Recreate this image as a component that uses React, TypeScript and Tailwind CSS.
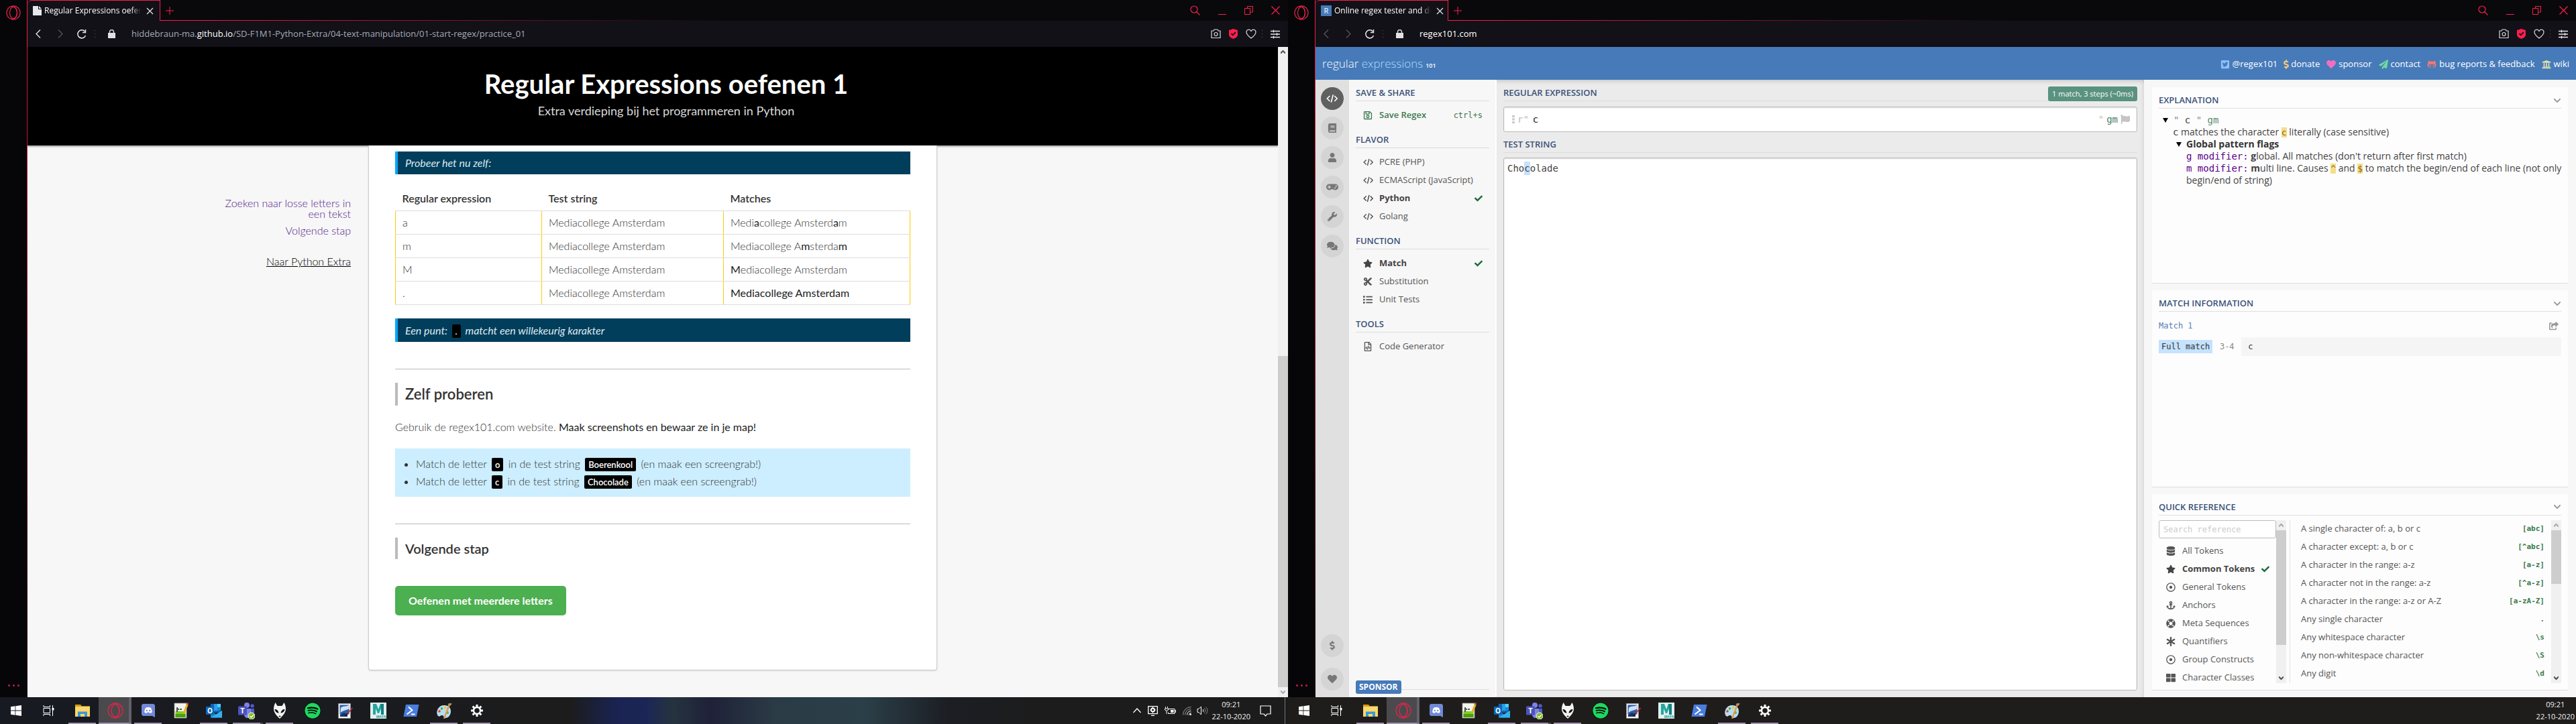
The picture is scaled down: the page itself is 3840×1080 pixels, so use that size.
import React from "react";
import {
  FaAnchor, FaAsterisk, FaBook, FaCheck, FaChevronDown, FaComments, FaCut, FaDatabase,
  FaDollarSign, FaFlag, FaGamepad, FaGithubAlt, FaHeart, FaLifeRing, FaList,
  FaPaperPlane, FaRegDotCircle, FaRegFileCode, FaRegSave, FaShareSquare, FaSpotify, FaStar,
  FaThLarge, FaTwitterSquare, FaUniversity, FaUser, FaWrench,
} from "react-icons/fa";

type Kids = { children: React.ReactNode };

/* ---------- browser chrome ---------- */

function OperaLogo({ className }: { className: string }) {
  return (
    <svg viewBox="0 0 24 24" fill="none" stroke="#e0244c" strokeWidth="1.3" className={className}>
      <circle cx="12" cy="12" r="11" />
      <ellipse cx="12" cy="12" rx="6" ry="9.5" />
      <path d="M9 2.500c5-1.500 9 3 9 9.500s-4 11-9 9.500" />
    </svg>
  );
}

function Dots() {
  return (
    <span className="flex flex-col gap-1" aria-hidden="true">
      <i className="size-px bg-[#5a5a62]" />
      <i className="size-px bg-[#5a5a62]" />
      <i className="size-px bg-[#5a5a62]" />
    </span>
  );
}

function ToolbarIcons() {
  return (
    <div className="flex items-center pr-3">
      <button aria-label="Snapshot" className="mr-3">
        <svg width="15" height="15" viewBox="0 0 15 15" fill="none" stroke="#d6d9de" strokeWidth="1.200">
          <path d="M1 3h3l1-2h5l1 2h3v10.500H1z" />
          <circle cx="7.500" cy="8" r="2.500" />
        </svg>
      </button>
      <button aria-label="Protection" className="mr-3">
        <svg width="13" height="15" viewBox="0 0 13 15">
          <path d="M6.500 0L13 2v7c0 3-3.500 5-6.500 6C3.500 14 0 12 0 9V2z" fill="#fa1e4e" />
          <path d="M3.500 7l2.300 2.300L9.800 5.200" fill="none" stroke="#121117" strokeWidth="1.800" />
        </svg>
      </button>
      <button aria-label="Bookmark" className="mr-2">
        <svg width="16" height="15" viewBox="0 0 16 15" fill="none" stroke="#d6d9de" strokeWidth="1.200">
          <path d="M8 14C4 11 1 8.500 1 5c0-4 5-5.500 7-1.500C10 -.5 15 1 15 5c0 3.500-3 6-7 9z" />
        </svg>
      </button>
      <Dots />
      <button aria-label="Easy setup" className="ml-3">
        <svg width="14" height="14" viewBox="0 0 14 14" stroke="#e6e6ea" strokeWidth="1.300">
          <path d="M0 2.500h14M0 7h14M0 11.500h14M4.500 .5v4M9.500 5v4M4.500 9.500v4" />
        </svg>
      </button>
    </div>
  );
}

function Browser({
  favicon, title, address, canGoBack, children,
}: Kids & { favicon: React.ReactNode; title: string; address: React.ReactNode; canGoBack: boolean }) {
  return (
    <div className="flex grow bg-[#060608]">
      <aside className="flex w-10 shrink-0 flex-col items-center justify-between pt-2 pb-3">
        <button aria-label="Opera menu"><OperaLogo className="size-[22px]" /></button>
        <button aria-label="More" className="flex gap-1 pb-1">
          <i className="size-[3px] rounded-full bg-[#c81e42]" />
          <i className="size-[3px] rounded-full bg-[#c81e42]" />
          <i className="size-[3px] rounded-full bg-[#c81e42]" />
        </button>
      </aside>
      <div className="w-px shrink-0 bg-linear-to-b from-[#fa1e4e] to-[#2a0812]" />
      <div className="flex min-w-0 grow flex-col">
        <div className="flex h-[31px] bg-[#09090b]">
          <button className="flex w-[198px] shrink-0 items-center rounded-tl-md border-t border-r border-[#fa1e4e] bg-[#121117] pl-2 font-['Open_Sans',sans-serif] text-xs text-white">
            {favicon}
            <span className="ml-1 w-36 overflow-hidden mask-r-from-90% text-left whitespace-nowrap">{title}</span>
            <svg width="11" height="11" viewBox="0 0 11 11" stroke="#e8e8ec" strokeWidth="1.200" className="ml-2">
              <path d="M1 1l9 9M10 1l-9 9" />
            </svg>
          </button>
          <div className="relative flex grow items-center justify-between pr-3 pl-2">
            <span className="absolute bottom-0 left-0 h-px w-1/2 bg-linear-to-r from-[#fa1e4e] to-transparent" />
            <button aria-label="New tab">
              <svg width="12" height="12" viewBox="0 0 12 12" stroke="#fa1e4e"><path d="M6 0v12M0 6h12" /></svg>
            </button>
            <div className="flex items-center gap-[27px]">
              <button aria-label="Search tabs">
                <svg width="15" height="15" viewBox="0 0 15 15" fill="none" stroke="#fa1e4e" strokeWidth="1.200">
                  <circle cx="6" cy="6" r="5" /><path d="M9.500 9.500L14.500 14.500" />
                </svg>
              </button>
              <button aria-label="Minimise">
                <svg width="12" height="12" viewBox="0 0 12 12" stroke="#fa1e4e"><path d="M0 11.500h12" /></svg>
              </button>
              <button aria-label="Restore">
                <svg width="13" height="13" viewBox="0 0 13 13" fill="none" stroke="#fa1e4e">
                  <path d="M.5 3.500h8v9h-8zM4.500 3V.5h8v8.500H9" />
                </svg>
              </button>
              <button aria-label="Close">
                <svg width="13" height="13" viewBox="0 0 13 13" stroke="#fa1e4e" strokeWidth="1.200"><path d="M.5 .5l12 12M12.500 .5l-12 12" /></svg>
              </button>
            </div>
          </div>
        </div>
        <div className="flex h-[39px] items-center bg-[#121117]">
          <button aria-label="Back" className="ml-3">
            <svg width="8" height="13" viewBox="0 0 8 13" fill="none" stroke={canGoBack ? "#e6e6ea" : "#55555c"} strokeWidth="1.300"><path d="M7 .5L1 6.500l6 6" /></svg>
          </button>
          <button aria-label="Forward" className="ml-[25px]">
            <svg width="8" height="13" viewBox="0 0 8 13" fill="none" stroke="#55555c" strokeWidth="1.300"><path d="M1 .5l6 6-6 6" /></svg>
          </button>
          <button aria-label="Reload" className="ml-[21px]">
            <svg width="14" height="14" viewBox="0 0 14 14" fill="none" stroke="#e6e6ea" strokeWidth="1.500">
              <path d="M12.500 9A6 6 0 1 1 11.500 3" /><path d="M12.500 0v4.500H8" />
            </svg>
          </button>
          <span className="ml-3"><Dots /></span>
          <svg width="11" height="13" viewBox="0 0 11 13" className="ml-[19px]" fill="#dfe1e5">
            <path d="M0 5h11v8H0z" /><path d="M2.500 6V3.500a3 3 0 0 1 6 0V6" fill="none" stroke="#dfe1e5" strokeWidth="1.400" />
          </svg>
          <div
            role="textbox"
            aria-label="Address"
            className="ml-6 grow font-['Open_Sans',sans-serif] text-[13px] whitespace-nowrap text-[#a3abb8]"
          >
            {address}
          </div>
          <ToolbarIcons />
        </div>
        {children}
      </div>
    </div>
  );
}

/* ---------- scrollbar ---------- */

function ScrollRail({ before, thumb, upOff, downOff }: { before: string; thumb: string; upOff?: boolean; downOff?: boolean }) {
  return (
    <div className="flex w-[15px] shrink-0 flex-col items-center bg-[#f0f0f0]" aria-hidden="true">
      <svg width="7" height="15" viewBox="0 0 7 15" fill="none" stroke={upOff ? "#a9a9a9" : "#505050"} strokeWidth="2">
        <path d="M0 9.500l3.500-3.500L7 9.500" />
      </svg>
      <div className="flex w-full grow flex-col">
        <div className={before} />
        <div className={"w-full bg-[#cdcdcd] " + thumb} />
      </div>
      <svg width="7" height="15" viewBox="0 0 7 15" fill="none" stroke={downOff ? "#a9a9a9" : "#505050"} strokeWidth="2">
        <path d="M0 5.500l3.500 3.500L7 5.500" />
      </svg>
    </div>
  );
}

/* ---------- course page ---------- */

function Chip({ children }: Kids) {
  return <code className="mx-[3px] rounded-xs bg-black px-[5px] py-0.5 font-['Lato',sans-serif] text-[13px] leading-none font-semibold text-white">{children}</code>;
}

function B({ children }: Kids) {
  return <b className="font-normal text-[#222]">{children}</b>;
}

const tableRows: [string, React.ReactNode][] = [
  ["a", <>Medi<B>a</B>college Amsterd<B>a</B>m</>],
  ["m", <>Mediacollege A<B>m</B>sterda<B>m</B></>],
  ["M", <><B>M</B>ediacollege Amsterdam</>],
  [".", <B>Mediacollege Amsterdam</B>],
];

function CoursePage() {
  const cell = "h-[35px] border-b border-[#ddd] px-2.5";
  return (
    <div className="flex grow bg-[#f7f7f7]">
      <div className="flex grow flex-col font-['Lato',sans-serif] text-base font-light text-[#333]">
        <header className="flex h-[147px] flex-col items-center bg-black pt-[31px] pl-10 shadow-[0_2px_2px_rgba(0,0,0,0.3)]">
          <h1 className="text-[40px] leading-[48px] font-bold text-white">Regular Expressions oefenen 1</h1>
          <p className="mt-1 text-lg leading-6 font-normal text-[#d8d8d8]">Extra verdieping bij het programmeren in Python</p>
        </header>
        <div className="grid grow grid-cols-[1fr_848px_1fr]">
          <nav className="flex flex-col items-end pt-[78px] pr-[26px] text-right leading-4 text-[#551a8b]">
            <a href="#losse-letters" className="w-48">Zoeken naar losse letters in een tekst</a>
            <a href="#volgende" className="mt-[9px]">Volgende stap</a>
            <a href="#python-extra" className="mt-[30px] text-black underline">Naar Python Extra</a>
          </nav>
          <main className="mb-10 rounded-b-sm border-x border-b border-[#ccc] bg-white px-[39px] pt-[9px] shadow-sm">
            <p className="border-l-4 border-[#00a8ff] bg-[#003e5c] pl-[11px] leading-[34px] font-normal text-[#dfe8ee] italic">Probeer het nu zelf:</p>
            <table className="mt-[19px] w-full border-collapse text-left">
              <thead>
                <tr>
                  <th className={cell + " w-[218px] font-semibold"}>Regular expression</th>
                  <th className={cell + " w-[271px] font-semibold"}>Test string</th>
                  <th className={cell + " font-semibold"}>Matches</th>
                </tr>
              </thead>
              <tbody>
                {tableRows.map(([re, result]) => (
                  <tr key={re}>
                    <td className={cell + " border-x border-x-[#fc0]"}>{re}</td>
                    <td className={cell + " border-x border-x-[#fc0]"}>Mediacollege Amsterdam</td>
                    <td className={cell + " border-x border-x-[#fc0]"}>{result}</td>
                  </tr>
                ))}
              </tbody>
            </table>
            <p className="mt-5 border-l-4 border-[#00a8ff] bg-[#003e5c] pl-[11px] leading-[35px] font-normal text-[#dfe8ee] italic">
              Een punt: <Chip>.</Chip> matcht een willekeurig karakter
            </p>
            <hr className="mt-10 border-[#bbb]" />
            <h3 className="mt-5 border-l-4 border-[#bbb] pl-[11px] text-[22px] leading-[34px] font-semibold text-[#333]">Zelf proberen</h3>
            <p className="mt-5 leading-6">Gebruik de regex101.com website. <B>Maak screenshots en bewaar ze in je map!</B></p>
            <ul className="mt-5 list-disc bg-[#cef] py-2.5 pl-[31px] leading-[26px]">
              <li>Match de letter <Chip>o</Chip> in de test string <Chip>Boerenkool</Chip> (en maak een screengrab!)</li>
              <li>Match de letter <Chip>c</Chip> in de test string <Chip>Chocolade</Chip> (en maak een screengrab!)</li>
            </ul>
            <hr className="mt-10 border-[#bbb]" />
            <h3 className="mt-5 border-l-4 border-[#bbb] pl-[11px] text-xl leading-8 font-semibold text-[#333]">Volgende stap</h3>
            <a href="#meerdere" className="mt-10 inline-block rounded-[5px] bg-[#4caf50] px-5 leading-[44px] font-bold text-white">
              Oefenen met meerdere letters
            </a>
          </main>
        </div>
      </div>
      <ScrollRail before="grow" thumb="basis-[494px]" downOff />
    </div>
  );
}

/* ---------- regex101 ---------- */

const mono = "font-['DejaVu_Sans_Mono',monospace]";

const CodeIcon = () => (
  <svg width="1.1em" height="1em" viewBox="0 0 15 14" fill="none" stroke="currentColor" strokeWidth="1.400">
    <path d="M4.500 3.500L1 7l3.500 3.500M10.500 3.500L14 7l-3.500 3.500M8.800 2L6.200 12" />
  </svg>
);

function MenuHeading({ children }: Kids) {
  return <h2 className="border-b border-[#dcdcdc] pb-[3px] text-[13px] leading-[18px] font-semibold text-[#3a5278]">{children}</h2>;
}

function MenuItem({
  icon, label, active, save, className,
}: { icon: React.ReactNode; label: string; active?: boolean; save?: boolean; className: string }) {
  return (
    <li>
      <button
        className={
          "flex h-[27px] w-full items-center text-[13px] " + className + " " +
          (save ? "font-semibold text-[#3d7a4e]" : active ? "font-bold text-[#444]" : "text-[#555]")
        }
      >
        <span className="flex w-6 shrink-0 text-sm">{icon}</span>
        <span className="grow text-left">{label}</span>
        {save && <kbd className={mono + " text-xs font-normal"}>ctrl+s</kbd>}
        {active && <FaCheck className="text-xs text-[#1c6b35]" />}
      </button>
    </li>
  );
}

function MenuSection({ title, items, save }: { title: string; items: [React.ReactNode, string, boolean?][]; save?: boolean }) {
  return (
    <section className="pt-3.5">
      <MenuHeading>{title}</MenuHeading>
      <ul className="pt-[7px]">
        {items.map(([icon, label, active]) => (
          <MenuItem key={label} icon={icon} label={label} active={active} save={save} className="pr-2.5 pl-[11px]" />
        ))}
      </ul>
    </section>
  );
}

function RoundButton({ label, active, children }: Kids & { label: string; active?: boolean }) {
  return (
    <button
      aria-label={label}
      className={
        "flex size-[34px] items-center justify-center rounded-full text-base " +
        (active ? "bg-[#606060] text-white" : "bg-[#d4d4d4] text-[#777]")
      }
    >
      {children}
    </button>
  );
}

function Panel({ title, children }: Kids & { title: string }) {
  return (
    <section className="flex flex-1 flex-col rounded-xs bg-[#fdfdfd] px-2.5 pt-[11px] pb-2.5 shadow-[0_1px_1px_rgba(0,0,0,0.1)]">
      <div className="flex items-center justify-between border-b border-[#dfdfdf] pb-[3px]">
        <h2 className="text-[13px] leading-[17px] font-semibold text-[#3a5278]">{title}</h2>
        <button aria-label={"Collapse " + title.toLowerCase()}><FaChevronDown className="text-xs text-[#999]" /></button>
      </div>
      {children}
    </section>
  );
}

function Mark({ children }: Kids) {
  return <mark className={mono + " bg-[#f5dd8c] text-[13px] leading-none text-[#8a6a00]"}>{children}</mark>;
}

function Flag({ children }: Kids) {
  return <span className={mono + " leading-none text-[#5a008a]"}>{children}</span>;
}

const Triangle = () => (
  <svg width="8" height="7" viewBox="0 0 8 7" className="shrink-0"><path d="M0 0h8L4 7z" /></svg>
);

const references: [string, string][] = [
  ["A single character of: a, b or c", "[abc]"],
  ["A character except: a, b or c", "[^abc]"],
  ["A character in the range: a-z", "[a-z]"],
  ["A character not in the range: a-z", "[^a-z]"],
  ["A character in the range: a-z or A-Z", "[a-zA-Z]"],
  ["Any single character", "."],
  ["Any whitespace character", "\\s"],
  ["Any non-whitespace character", "\\S"],
  ["Any digit", "\\d"],
];

const tokens: [React.ReactNode, string, boolean?][] = [
  [<FaDatabase />, "All Tokens"],
  [<FaStar />, "Common Tokens", true],
  [<FaRegDotCircle />, "General Tokens"],
  [<FaAnchor />, "Anchors"],
  [<FaLifeRing />, "Meta Sequences"],
  [<FaAsterisk />, "Quantifiers"],
  [<FaRegDotCircle />, "Group Constructs"],
  [<FaThLarge />, "Character Classes"],
];

const siteLinks: [React.ReactNode, string][] = [
  [<FaTwitterSquare className="text-[#8fc0ff]" />, "@regex101"],
  [<FaDollarSign className="-mx-1 text-[#f5c87a]" />, "donate"],
  [<FaHeart className="text-[#f06fc0]" />, "sponsor"],
  [<FaPaperPlane className="text-[#6fdc9a]" />, "contact"],
  [<FaGithubAlt className="text-[#f07878]" />, "bug reports & feedback"],
  [<FaUniversity className="text-[#dfe0b0]" />, "wiki"],
];

function RegexPage() {
  return (
    <div className="flex grow flex-col bg-[#f7f7f7] font-['Open_Sans',sans-serif] text-[#333]">
      <header className="flex h-[49px] items-center justify-between bg-[#467ab9] pr-2.5 pl-2.5">
        <a href="#home" className="flex items-baseline text-[17px] font-light text-white">
          regular&nbsp;<span className="text-[#a8dcff]">expressions</span>
          <span className="ml-1 text-[9px] font-semibold">101</span>
        </a>
        <nav className="flex items-center gap-2.5 pt-0.5 text-[13px] text-white">
          {siteLinks.map(([icon, label]) => (
            <a key={label} href={"#" + label} className="flex items-center gap-1">
              <span className="text-sm">{icon}</span>{label}
            </a>
          ))}
        </nav>
      </header>
      <div className="flex grow">
        <div className="flex w-[50px] shrink-0 flex-col items-center justify-between bg-[#e0e0e0] pt-[11px] pb-2.5">
          <div className="flex flex-col gap-2.5">
            <RoundButton label="Editor" active><CodeIcon /></RoundButton>
            <RoundButton label="Library"><FaBook className="text-sm" /></RoundButton>
            <RoundButton label="Account"><FaUser className="text-sm" /></RoundButton>
            <RoundButton label="Quiz"><FaGamepad className="text-lg" /></RoundButton>
            <RoundButton label="Settings"><FaWrench className="text-sm" /></RoundButton>
            <RoundButton label="Chat"><FaComments /></RoundButton>
          </div>
          <div className="flex flex-col gap-4">
            <RoundButton label="Donate"><FaDollarSign className="text-sm" /></RoundButton>
            <RoundButton label="Sponsor"><FaHeart className="text-sm" /></RoundButton>
          </div>
        </div>
        <aside className="flex w-[220px] shrink-0 flex-col justify-between border-r-2 border-white bg-[#f7f7f7] pr-[9px] pl-2.5">
          <div className="-mt-1 flex flex-col">
            <MenuSection title="SAVE & SHARE" save items={[[<FaRegSave />, "Save Regex"]]} />
            <MenuSection
              title="FLAVOR"
              items={[
                [<CodeIcon />, "PCRE (PHP)"],
                [<CodeIcon />, "ECMAScript (JavaScript)"],
                [<CodeIcon />, "Python", true],
                [<CodeIcon />, "Golang"],
              ]}
            />
            <MenuSection
              title="FUNCTION"
              items={[[<FaStar />, "Match", true], [<FaCut />, "Substitution"], [<FaList />, "Unit Tests"]]}
            />
            <MenuSection title="TOOLS" items={[[<FaRegFileCode />, "Code Generator"]]} />
          </div>
          <div className="mb-[5px] flex items-end">
            <a href="#sponsor" className="rounded-[3px] bg-[#467ab9] px-[5px] text-xs leading-5 font-bold text-white">SPONSOR</a>
            <span className="mb-1.5 h-px grow bg-[#dcdcdc]" />
          </div>
        </aside>
        <main className="flex min-w-0 grow flex-col bg-[#ebebeb] px-2.5 pt-2.5 pb-2.5 shadow-[inset_0_6px_6px_-4px_rgba(0,0,0,0.15),inset_-5px_0_6px_-4px_rgba(0,0,0,0.1)]">
          <div className="flex items-start">
            <div className="grow"><MenuHeading>REGULAR EXPRESSION</MenuHeading></div>
            <output className="-mb-1 rounded-[3px] bg-[#5a9280] px-1.5 text-[11px] leading-[22px] text-white">1 match, 3 steps (~0ms)</output>
          </div>
          <div className={mono + " mt-2 flex h-[38px] items-center rounded-[3px] border border-[#bbb] bg-white px-2.5 text-sm shadow-[inset_0_1px_2px_rgba(0,0,0,0.15)]"}>
            <svg width="4" height="12" viewBox="0 0 4 12" fill="#ccc" className="ml-0.5"><path d="M0 0h4v3H0zM0 4.500h4v3H0zM0 9h4v3H0z" /></svg>
            <span className="ml-1 text-[#bbb]">r"</span>
            <input aria-label="Regular expression" defaultValue="c" className="ml-1.5 min-w-0 grow text-[#222] outline-none" />
            <span className="text-[#bbb]">"</span>
            <span className="ml-1 text-[#4d7d63]">gm</span>
            <FaFlag className="ml-1 text-[#c4c4c4]" />
          </div>
          <div className="mt-[9px]"><MenuHeading>TEST STRING</MenuHeading></div>
          <div className={mono + " relative mt-[7px] flex grow rounded-[3px] border border-[#bbb] bg-white text-sm leading-5 shadow-[inset_0_1px_2px_rgba(0,0,0,0.15)]"}>
            <span className="absolute top-[5px] left-[calc(5px+3ch)] h-5 w-[1ch] bg-[#c5e2ff]" />
            <textarea
              aria-label="Test string"
              defaultValue="Chocolade"
              className="relative grow resize-none px-[5px] py-[5px] text-[#444] outline-none"
            />
          </div>
        </main>
        <div className="flex w-[644px] shrink-0 flex-col gap-[11px] px-3 pt-[11px] pb-[11px]">
          <Panel title="EXPLANATION">
            <div className="-mr-2.5 pt-2 pl-[6px] text-sm leading-[18px] text-[#444]">
              <div className={mono + " flex items-center gap-2"}>
                <Triangle />
                <span><span className="text-[#888]">"</span> c <span className="text-[#888]">"</span> <span className="text-[#5c8a72]">gm</span></span>
              </div>
              <div className="pl-[15px]">
                <span className={mono + " leading-none"}>c</span> matches the character <Mark>c</Mark> literally (case sensitive)
                <div className="flex items-center gap-[7px] pl-[5px] font-bold text-[#333]"><Triangle />Global pattern flags</div>
                <div className="pl-5">
                  <div><Flag>g modifier:</Flag> <b>g</b>lobal. All matches (don't return after first match)</div>
                  <div><Flag>m modifier:</Flag> <b>m</b>ulti line. Causes <Mark>^</Mark> and <Mark>$</Mark> to match the begin/end of each line (not only begin/end of string)</div>
                </div>
              </div>
            </div>
          </Panel>
          <Panel title="MATCH INFORMATION">
            <div className={mono + " text-xs"}>
              <div className="flex h-[38px] items-center justify-between pt-1 pr-1 text-[#5a80b8]">
                Match 1
                <button aria-label="Export matches"><FaShareSquare className="text-sm text-[#999]" /></button>
              </div>
              <div className="flex items-center">
                <span className="bg-[#c5e2ff] px-1 leading-5 text-[#333]">Full match</span>
                <span className="w-[43px] text-center text-[#888]">3-4</span>
                <span className="grow rounded-xs bg-[#f5f5f5] pl-2.5 leading-7 text-[#333]">c</span>
              </div>
            </div>
          </Panel>
          <Panel title="QUICK REFERENCE">
            <div className="mt-[7px] flex h-0 grow overflow-hidden">
              <div className="w-[175px] shrink-0">
                <input
                  aria-label="Search reference"
                  placeholder="Search reference"
                  className={mono + " h-[27px] w-full rounded-[3px] border border-[#bbb] bg-white px-1.5 text-xs placeholder:text-[#ccc]"}
                />
                <ul className="pt-[5px]">
                  {tokens.map(([icon, label, active]) => (
                    <MenuItem key={label} icon={icon} label={label} active={active} className="pr-2.5 pl-[11px]" />
                  ))}
                </ul>
              </div>
              <ScrollRail before="h-0" thumb="h-[171px]" upOff />
              <ul className="ml-[5px] grow border-l border-[#dfdfdf] pr-2.5 pl-4 text-[13px] text-[#555]">
                {references.map(([text, code]) => (
                  <li key={code}>
                    <button className="flex h-[27px] w-full items-center justify-between">
                      {text}
                      <code className={mono + " text-[11px] font-bold text-[#3d7a4e]"}>{code}</code>
                    </button>
                  </li>
                ))}
              </ul>
              <ScrollRail before="h-0" thumb="h-20" upOff />
            </div>
          </Panel>
        </div>
      </div>
    </div>
  );
}

/* ---------- taskbar ---------- */

const WindowsIcon = () => (
  <svg width="16" height="16" viewBox="0 0 16 16" fill="#fff">
    <path d="M0 2.200L6.500 1.300V7.600H0zM7.300 1.200L16 0v7.600H7.300zM0 8.400h6.500v6.300L0 13.800zM7.300 8.400H16V16l-8.700-1.200z" />
  </svg>
);

const TaskViewIcon = () => (
  <svg width="17" height="16" viewBox="0 0 17 16" fill="none" stroke="#fff">
    <path d="M1 0v2.500h9.500V0M1 16v-2.500h9.500V16M1 4.500h9.500v7H1zM14.500 0v16" /><path d="M13.500 4h3v3.500h-3z" fill="#fff" stroke="none" />
  </svg>
);

const ExplorerIcon = () => (
  <svg width="22" height="18" viewBox="0 0 22 18">
    <path d="M0 0h8l2 2.500H0z" fill="#e39a05" /><path d="M0 2.500h22V18H0z" fill="#ffd868" />
    <path d="M4 18v-7.500h14V18h-4v-4H8v4z" fill="#3b97dc" />
  </svg>
);

const DiscordIcon = () => (
  <svg width="20" height="20" viewBox="0 0 20 20">
    <path d="M2 0h16l2 2v18l-4-2H2l-2-2V2z" fill="#7289da" />
    <path d="M6.500 5.500c2-.8 5-.8 7 0 1.500 2 2.300 4.500 2.200 7-1 .8-2 1.300-3 1.400l-.7-1.200H8l-.7 1.200c-1-.1-2-.6-3-1.400-.1-2.500.7-5 2.200-7z" fill="#fff" />
    <circle cx="7.800" cy="10" r="1.200" fill="#7289da" /><circle cx="12.200" cy="10" r="1.200" fill="#7289da" />
  </svg>
);

const NotepadIcon = () => (
  <svg width="22" height="24" viewBox="0 0 22 24">
    <path d="M1 1h18v22H1z" fill="#f4f4ee" stroke="#999" strokeWidth=".8" /><path d="M2.500 13h15v9h-15z" fill="#7fd020" />
    <path d="M2.500 17h15v5h-15z" fill="#4aa010" />
    <path d="M5 7v7M5 10h3M9 10h3" stroke="#222" strokeWidth="1.500" /><path d="M21 1l-6 15" stroke="#e8b020" strokeWidth="3" /><path d="M21.500 0l-1 3" stroke="#c03030" strokeWidth="3" />
  </svg>
);

const OutlookIcon = () => (
  <svg width="24" height="22" viewBox="0 0 24 22">
    <path d="M7 1h15v13H7z" fill="#0f64b4" /><path d="M12 1h5v5h-5zM12 6h5v5h-5z" fill="#28a0e4" /><path d="M17 1h5v5h-5z" fill="#50d0ff" /><path d="M17 6h5v5h-5z" fill="#1888d8" />
    <path d="M7 11l8.500 6L24 11v10.500H7z" fill="#1a86d8" /><path d="M7 21.500L24 11v10.500z" fill="#35b1ee" />
    <rect y="5" width="12" height="12" rx="1" fill="#0a68be" />
    <text x="6" y="14.500" textAnchor="middle" fontFamily="Open Sans" fontWeight="700" fontSize="10" fill="#fff">O</text>
  </svg>
);

const TeamsIcon = () => (
  <svg width="25" height="25" viewBox="0 0 25 25">
    <circle cx="13" cy="4" r="4" fill="#7b83eb" /><circle cx="21" cy="5" r="2.800" fill="#5059c9" />
    <path d="M9 9h10v8a5 5 0 0 1-10 2z" fill="#7b83eb" /><path d="M19 9h5v6a4 4 0 0 1-5 3z" fill="#5059c9" />
    <rect y="5.500" width="13" height="13" rx="1" fill="#4b53bc" />
    <text x="6.500" y="16" textAnchor="middle" fontFamily="Open Sans" fontWeight="700" fontSize="11" fill="#fff">T</text>
    <circle cx="20" cy="20" r="5" fill="#84bd1c" stroke="#fff" /><path d="M17.500 20l2 2 3.500-3.800" fill="none" stroke="#fff" strokeWidth="1.300" />
  </svg>
);

const FoobarIcon = () => (
  <svg width="20" height="24" viewBox="0 0 20 24">
    <path d="M3.500 0l3 5h7l3-5c2 4 2.500 7 2.500 9.500 0 5-4 10-9 14.500C5 19.500 1 14.500 1 9.500 1 7 1.500 4 3.500 0z" fill="#f4f4f4" />
    <path d="M2.500 10c3 0 5.500 2 6 5.500-3 0-5.500-2-6-5.500zM17.500 10c-3 0-5.500 2-6 5.500 3 0 5.500-2 6-5.500zM8 20.500l2-1 2 1-2 1z" fill="#111" />
  </svg>
);

const PaintNetIcon = () => (
  <svg width="22" height="23" viewBox="0 0 22 23">
    <path d="M.5 .5h18v22H.5z" fill="#f4f4f4" stroke="#888" /><path d="M2.500 2.500h14v14h-14z" fill="#2e5fb0" />
    <path d="M4 7c4-4 8-1 12.500-4.500V8c-4 3-8 2-13 6z" fill="#cfe2f8" /><path d="M3 17l6-3 5 3v3H3z" fill="#17346e" />
    <path d="M21.500 7l-8 9" stroke="#c02828" strokeWidth="1.800" /><path d="M14 15.500l-4 4" stroke="#222" strokeWidth="2" />
  </svg>
);

const MayaIcon = () => (
  <svg width="24" height="24" viewBox="0 0 24 24">
    <path d="M0 0h24v24H0z" fill="#dff1ef" />
    <path d="M4 2h5l3 8 3-8h5v16h-4V9l-3 7h-2L8 9v9H4z" fill="#2aa5a0" /><path d="M15 2h5v16h-4V9z" fill="#12807f" />
    <text x="16" y="23" textAnchor="middle" fontFamily="Open Sans" fontWeight="700" fontSize="5" fill="#12a09a">MAYA</text>
  </svg>
);

const PowerShellIcon = () => (
  <svg width="24" height="18" viewBox="0 0 24 18">
    <path d="M4 0h19.500L20 18H.5z" fill="#4a7ddf" /><path d="M8 3.500l5.500 5L5.500 14.500M12 14.500h5.500" fill="none" stroke="#fff" strokeWidth="2" />
  </svg>
);

const PaintIcon = () => (
  <svg width="24" height="23" viewBox="0 0 24 23">
    <path d="M12 3c7 0 10 4 10 9s-3 10-8 10c-3 0-2-4-5-4s-3 3-6 1C-1 15 2 3 12 3z" fill="#b8dcf0" />
    <circle cx="5" cy="12" r="1.800" fill="#e04030" /><circle cx="8.500" cy="8" r="1.800" fill="#50a838" /><circle cx="13.500" cy="6.500" r="1.800" fill="#f0c030" /><circle cx="17" cy="14" r="2" fill="#60b040" />
    <path d="M19 4l-7 19" stroke="#e49a48" strokeWidth="2.200" /><path d="M17.500 3.500L19 0l5 .5-3.500 4z" fill="#c09060" />
  </svg>
);

const GearIcon = () => (
  <svg width="18" height="18" viewBox="0 0 18 18" fill="none" stroke="#fff">
    <circle cx="9" cy="9" r="5" strokeWidth="2.400" />
    <path d="M9 0v3M9 15v3M0 9h3M15 9h3M2.600 2.600l2.200 2.200M13.200 13.200l2.200 2.200M2.600 15.400l2.200-2.200M13.200 4.800l2.200-2.200" strokeWidth="3" />
  </svg>
);

const apps: { name: string; icon: React.ReactNode; open?: boolean; stacked?: boolean; current?: boolean }[] = [
  { name: "File Explorer", icon: <ExplorerIcon />, open: true },
  { name: "Opera GX", icon: <OperaLogo className="size-6" />, open: true, stacked: true, current: true },
  { name: "Discord", icon: <DiscordIcon />, open: true },
  { name: "Notepad++", icon: <NotepadIcon /> },
  { name: "Outlook", icon: <OutlookIcon />, open: true },
  { name: "Teams", icon: <TeamsIcon />, open: true, stacked: true },
  { name: "foobar2000", icon: <FoobarIcon />, open: true },
  { name: "Spotify", icon: <FaSpotify className="size-6 rounded-full bg-black text-[#1ed760]" /> },
  { name: "paint.net", icon: <PaintNetIcon /> },
  { name: "Maya", icon: <MayaIcon /> },
  { name: "PowerShell", icon: <PowerShellIcon /> },
  { name: "Paint", icon: <PaintIcon />, open: true },
  { name: "Settings", icon: <GearIcon />, open: true },
];

function Clock() {
  return (
    <time className="flex flex-col items-center text-[11px] leading-[18px] text-[#f0f0f0]">
      <span>09:21</span>
      <span>22-10-2020</span>
    </time>
  );
}

function Taskbar({ className, children }: Kids & { className: string }) {
  return (
    <footer className={"flex h-10 shrink-0 items-stretch justify-between font-['Open_Sans',sans-serif] " + className}>
      <div className="flex">
        <button aria-label="Start" className="flex w-12 items-center justify-center"><WindowsIcon /></button>
        <button aria-label="Task view" className="mr-0.5 flex w-12 items-center justify-center"><TaskViewIcon /></button>
        {apps.map((app) => (
          <button
            key={app.name}
            aria-label={app.name}
            className={"relative flex w-[49px] items-center justify-center " + (app.current ? "bg-[#4a4a4c]" : "")}
          >
            {app.icon}
            {app.open && (
              <span className={"absolute bottom-0 flex h-0.5 bg-[#a397b3] " + (app.current ? "inset-x-0" : "inset-x-1")} />
            )}
            {app.stacked && <span className={"absolute right-0 bottom-0 w-1 bg-[#77707f]/60 " + (app.current ? "h-full" : "h-0.5")} />}
          </button>
        ))}
      </div>
      {children}
    </footer>
  );
}

function Tray() {
  return (
    <div className="flex items-center">
      <svg width="12" height="8" viewBox="0 0 12 8" fill="none" stroke="#fff" strokeWidth="1.300"><path d="M.5 7L6 1l5.500 6" /></svg>
      <svg width="15" height="15" viewBox="0 0 15 15" className="ml-2.5" fill="none" stroke="#fff" strokeWidth="1.300">
        <path d="M.7 .7h13.600v11H.7zM5 14.300h5" /><circle cx="7.500" cy="6" r="2.500" strokeWidth="2" /><path d="M7.500 1.500v9M3.500 6h8" strokeDasharray="2 5" />
      </svg>
      <svg width="17" height="13" viewBox="0 0 17 13" className="ml-2.5" fill="none" stroke="#fff">
        <path d="M5.500 3.500h9.500v7H5.500v-2M15 5.500h1.500v3H15M1.500 0v2.500M4.500 0v2.500M.5 3h5v2L3 6.500.5 5zM3 6.500V11" /><path d="M9 5h4.500v4H9z" fill="#fff" stroke="none" />
      </svg>
      <svg width="13" height="13" viewBox="0 0 13 13" className="ml-2.5" fill="none" stroke="#999">
        <path d="M.5 12.500a12 12 0 0 1 12-12M3.500 12.500a9 9 0 0 1 9-9" /><path d="M6.500 12.500a6 6 0 0 1 6-6M9.500 12.500a3 3 0 0 1 3-3" stroke="#fff" /><circle cx="11.800" cy="11.800" r="1.200" fill="#fff" stroke="none" />
      </svg>
      <svg width="17" height="14" viewBox="0 0 17 14" className="mr-1.5 ml-2" fill="none" stroke="#fff">
        <path d="M1 4.500h2L6.500 1v12L3 9.500H1zM9 5c1 1 1 3 0 4" /><path d="M11 3c2 2 2 6 0 8M13.500 1.500c3 3 3 8 0 11" stroke="#888" />
      </svg>
      <Clock />
      <button aria-label="Notifications" className="mr-5 ml-3.5">
        <svg width="17" height="17" viewBox="0 0 17 17" fill="none" stroke="#fff" strokeWidth="1.200"><path d="M1 1h15v12h-5l-2.500 3-2.500-3H1z" /></svg>
      </button>
      <span className="mr-1 h-10 w-px bg-[#777]" />
    </div>
  );
}

export default function App() {
  return (
    <div className="grid min-h-screen grid-cols-2">
      <div className="flex flex-col">
        <Browser
          canGoBack
          title="Regular Expressions oefenen 1"
          favicon={<svg width="13" height="14" viewBox="0 0 13 14" fill="#e6e8ec"><path d="M0 0h8v5h5v9H0z" /><path d="M9 0l4 4H9z" /></svg>}
          address={<>hiddebraun-ma.<span className="text-white">github.io</span>/SD-F1M1-Python-Extra/04-text-manipulation/01-start-regex/practice_01</>}
        >
          <CoursePage />
        </Browser>
        <Taskbar className="bg-linear-to-r from-[#181a22] from-0% via-[#1c1c1c] via-45% to-[#1c1c1c]">
          <div className="grow bg-[linear-gradient(90deg,transparent_12%,#1a2350_19%,#1c2656_24%,#25333f_28%,#1f2138_34%,#2a3b45_44%,#2b3f48_58%,#1c1e24_71%,transparent_85%)]" />
          <Tray />
        </Taskbar>
      </div>
      <div className="flex flex-col">
        <Browser
          canGoBack={false}
          title="Online regex tester and debugger"
          favicon={<span className="flex size-4 items-center justify-center bg-[#467ab9] text-[11px] text-white">R</span>}
          address={<span className="text-white">regex101.com</span>}
        >
          <RegexPage />
        </Browser>
        <Taskbar className="bg-[#1f1d1c]">
          <div className="flex items-center pr-0.5"><Clock /></div>
        </Taskbar>
      </div>
    </div>
  );
}
